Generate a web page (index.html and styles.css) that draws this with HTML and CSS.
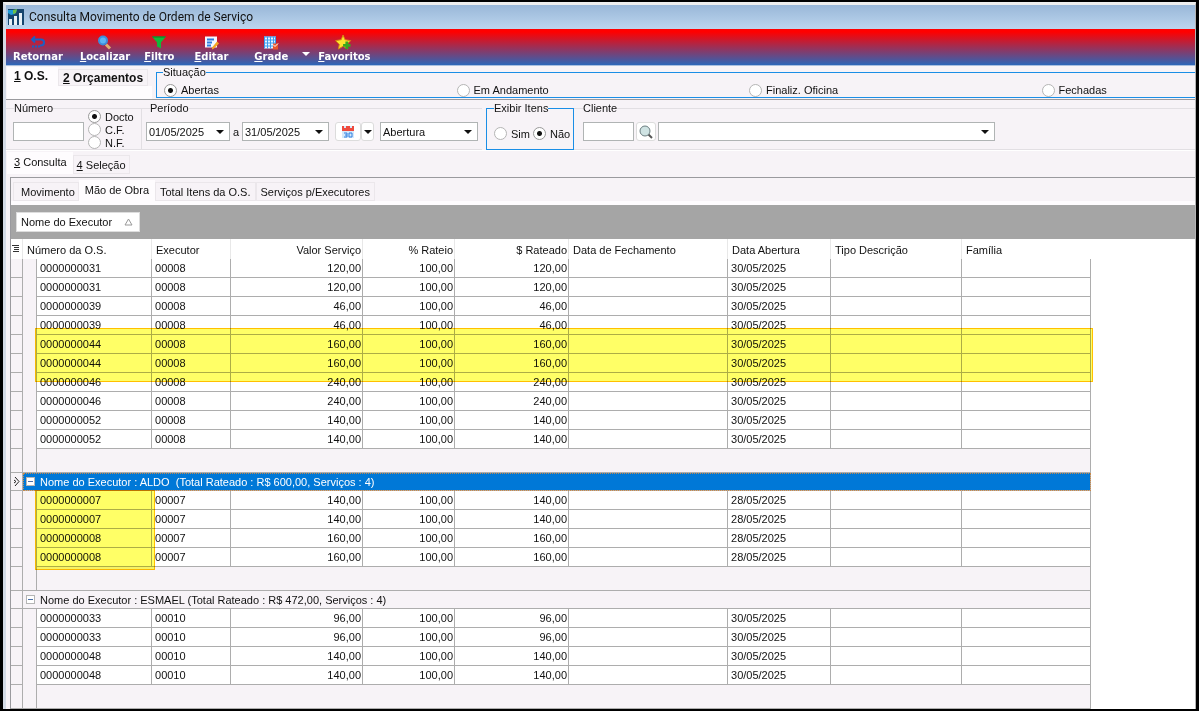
FILE: index.html
```html
<!DOCTYPE html>
<html lang="pt-BR">
  <head>
    <meta charset="UTF-8" />
    <meta name="viewport" content="width=device-width, initial-scale=1.0" />
    <title>Consulta Movimento de Ordem de Serviço</title>
    <link rel="stylesheet" href="styles.css">
  </head>

  <body>
    <div class="janela">
      <header class="titulo">
        <svg width="16" height="16" viewBox="0 0 16 16">
          <rect width="16" height="16" fill="#17466f" />
          <path d="M0 1h9L7 5 3 6 0 4z" fill="#1f9bd8" />
          <path d="M5 1l4-1-1 4-3 1z" fill="#6cc04a" />
          <path d="M1 10h3v6H1zM6 7h3v9H6zM11 4h3v12h-3z" fill="#e8f1f7" />
        </svg>
        <h1>Consulta Movimento de Ordem de Serviço</h1>
      </header>

      <nav class="barra">
        <button type="button" class="b-retornar">
          <svg width="16" height="14" viewBox="0 0 16 14">
            <path d="M5 1L2 4l3 3M2 4h9q3 0 3 3t-3 3h-1" fill="none" stroke="#1c5fc4" stroke-width="2" />
            <path d="M2 11h8" stroke="#1c5fc4" stroke-width="2" stroke-dasharray="2 1" />
          </svg>
          <span>Retornar</span>
        </button>
        <button type="button" class="b-localizar">
          <svg width="16" height="14" viewBox="0 0 16 14">
            <path d="M9 9l4 4" stroke="#e0b070" stroke-width="3" />
            <circle cx="6" cy="5" r="4" fill="#5cb4f5" stroke="#3b8edb" stroke-width="2" />
          </svg>
          <span><u>L</u>ocalizar</span>
        </button>
        <button type="button" class="b-filtro">
          <svg width="16" height="14" viewBox="0 0 16 14">
            <path d="M1 1h14L10 7v6l-4-2V7z" fill="#12b83a" />
            <path d="M1 1h14l-1 1H2z" fill="#0a7f28" />
          </svg>
          <span><u>F</u>iltro</span>
        </button>
        <button type="button" class="b-editar">
          <svg width="16" height="14" viewBox="0 0 16 14">
            <rect x="2" y="1" width="12" height="11" fill="#f4f8ff" />
            <path d="M4 4h7M4 7h5M4 10h4" stroke="#2c7be0" stroke-width="2" />
            <path d="M9 12l5-6 2 2-5 5-2 1z" fill="#f5a623" />
          </svg>
          <span><u>E</u>ditar</span>
        </button>
        <button type="button" class="b-grade">
          <svg width="16" height="14" viewBox="0 0 16 14">
            <rect x="1" y="1" width="12" height="12" fill="#e9f5ff" />
            <path d="M1 1.5h12M1 4.5h12M1 7.5h12M1 10.5h12M1.500 1v12M4.500 1v12M7.500 1v12M10.500 1v12M12.500 1v12" stroke="#3b9cf0" />
            <rect x="10" y="8" width="5" height="6" fill="#e8552b" />
            <path d="M10 9l2 2 3-3" fill="none" stroke="#fff" />
          </svg>
          <span><u>G</u>rade</span>
        </button>
        <button type="button" class="seta-barra" aria-label="Opções da grade"></button>
        <button type="button" class="b-favoritos">
          <svg width="18" height="16" viewBox="0 0 18 16">
            <path d="M8 0l2 5 6 1-4 4 1 5-5-3-5 3 1-5-4-4 6-1z" fill="#ffe52e" stroke="#d58a10" />
            <path d="M12 7v8M8 11h8" stroke="#3aa81f" stroke-width="3" />
          </svg>
          <span><u>F</u>avoritos</span>
        </button>
      </nav>

      <section class="topo">
        <div class="abas-os">
          <button type="button" class="aba ativa"><u>1</u> O.S.</button>
          <button type="button" class="aba"><u>2</u> Orçamentos</button>
        </div>
        <fieldset class="situacao">
          <legend>Situação</legend>
          <label><input type="radio" name="situacao" checked />Abertas</label>
          <label><input type="radio" name="situacao" />Em Andamento</label>
          <label><input type="radio" name="situacao" />Finaliz. Oficina</label>
          <label><input type="radio" name="situacao" />Fechadas</label>
        </fieldset>
      </section>

      <form class="filtros">
        <fieldset class="numero">
          <legend>Número</legend>
          <input type="text" class="campo" aria-label="Número" />
          <div class="tipos">
            <label><input type="radio" name="tipo" checked />Docto</label>
            <label><input type="radio" name="tipo" />C.F.</label>
            <label><input type="radio" name="tipo" />N.F.</label>
          </div>
        </fieldset>

        <fieldset class="periodo">
          <legend>Período</legend>
          <div class="combo data">
            <input type="text" value="01/05/2025" aria-label="Data inicial" />
          </div>
          <label for="fim">a</label>
          <div class="combo data">
            <input type="text" id="fim" value="31/05/2025" />
          </div>
          <div class="calendario">
            <button type="button" aria-label="Calendário">
              <svg width="14" height="14" viewBox="0 0 14 14">
                <rect x="1" y="1" width="12" height="12" fill="#d5e9fb" />
                <path d="M1 1h2v2h2V1h4v2h2V1h2v5H1z" fill="#ee4b3e" />
                <path d="M3 8h3v4H3M4 10h2M8 8h3v4H8z" fill="none" stroke="#2e7fe0" />
              </svg>
            </button>
            <button type="button" class="menu" aria-label="Opções de período"></button>
          </div>
          <div class="combo tipo-data">
            <select aria-label="Tipo de data"><option>Abertura</option></select>
          </div>
        </fieldset>

        <fieldset class="exibir">
          <legend>Exibir Itens</legend>
          <label><input type="radio" name="itens" />Sim</label>
          <label><input type="radio" name="itens" checked />Não</label>
        </fieldset>

        <fieldset class="cliente">
          <legend>Cliente</legend>
          <input type="text" class="campo" aria-label="Código do cliente" />
          <button type="button" class="lupa" aria-label="Pesquisar cliente">
            <svg width="16" height="16" viewBox="0 0 16 16">
              <path d="M10 10l4 4" stroke="#555" stroke-width="2" />
              <circle cx="7" cy="7" r="5" fill="#cfe3e3" stroke="#6b7d80" />
            </svg>
          </button>
          <div class="combo nome-cliente">
            <select aria-label="Nome do cliente"><option></option></select>
          </div>
        </fieldset>
      </form>

      <div class="abas abas-consulta">
        <button type="button" class="aba ativa"><u>3</u> Consulta</button>
        <button type="button" class="aba"><u>4</u> Seleção</button>
      </div>

      <main class="consulta">
        <div class="abas abas-grade">
          <button type="button" class="aba">Movimento</button>
          <button type="button" class="aba ativa">Mão de Obra</button>
          <button type="button" class="aba">Total Itens da O.S.</button>
          <button type="button" class="aba">Serviços p/Executores</button>
        </div>

        <div class="agrupar">
          <button type="button">
            Nome do Executor
            <svg width="9" height="8" viewBox="0 0 9 8">
              <path d="M4.500 1L8 7H1z" fill="none" stroke="#999" />
            </svg>
          </button>
        </div>

        <div class="grade">
          <table>
            <colgroup>
              <col class="c-ind" /><col class="c-rec" /><col class="c-os" /><col class="c-exec" />
              <col class="c-valor" /><col class="c-perc" /><col class="c-rateado" /><col class="c-fech" />
              <col class="c-abert" /><col class="c-tipo" /><col class="c-fam" />
            </colgroup>
            <thead>
              <tr>
                <th>
                  <svg width="8" height="9" viewBox="0 0 8 9">
                    <path d="M0 1.5h7M2 3.5h5M2 5.5h5M1 7.5h6" stroke="#333" />
                  </svg>
                </th>
                <th colspan="2">Número da O.S.</th>
                <th>Executor</th>
                <th class="num">Valor Serviço</th>
                <th class="num">% Rateio</th>
                <th class="num">$ Rateado</th>
                <th>Data de Fechamento</th>
                <th>Data Abertura</th>
                <th>Tipo Descrição</th>
                <th>Família</th>
              </tr>
            </thead>
            <tbody id="linhas"></tbody>
          </table>
          <div class="marca marca-linhas"></div>
          <div class="marca marca-os"></div>
        </div>
      </main>
    </div>

    <script>
      const grupos = [
        {
          executor: "00008",
          data: "30/05/2025",
          itens: [
            ["0000000031", "120,00"],
            ["0000000031", "120,00"],
            ["0000000039", "46,00"],
            ["0000000039", "46,00"],
            ["0000000044", "160,00"],
            ["0000000044", "160,00"],
            ["0000000046", "240,00"],
            ["0000000046", "240,00"],
            ["0000000052", "140,00"],
            ["0000000052", "140,00"],
          ],
        },
        {
          titulo: "Nome do Executor : ALDO\u00a0 (Total Rateado : R$ 600,00, Serviços : 4)",
          atual: true,
          executor: "00007",
          data: "28/05/2025",
          itens: [
            ["0000000007", "140,00"],
            ["0000000007", "140,00"],
            ["0000000008", "160,00"],
            ["0000000008", "160,00"],
          ],
        },
        {
          titulo: "Nome do Executor : ESMAEL (Total Rateado : R$ 472,00, Serviços : 4)",
          executor: "00010",
          data: "30/05/2025",
          itens: [
            ["0000000033", "96,00"],
            ["0000000033", "96,00"],
            ["0000000048", "140,00"],
            ["0000000048", "140,00"],
          ],
        },
      ];

      let html = "";

      grupos.forEach((g) => {
        if (g.titulo) {
          const seta = g.atual
            ? '<svg width="6" height="9" viewBox="0 0 6 9"><path d="M1 0l4 4.5L1 9M0 3l2 1.5L0 6" fill="none" stroke="#222"/></svg>'
            : "";
          html += `<tr class="grupo ${g.atual ? "atual" : ""}">
            <td class="ind">${seta}</td>
            <td colspan="10"><div><button type="button" class="recolher" aria-label="Recolher"></button>${g.titulo}</div></td>
          </tr>`;
        }

        g.itens.forEach(([os, valor]) => {
          html += `<tr>
            <td class="ind"></td><td class="rec"></td>
            <td>${os}</td><td>${g.executor}</td>
            <td class="num">${valor}</td><td class="num">100,00</td><td class="num">${valor}</td>
            <td></td><td>${g.data}</td><td></td><td></td>
          </tr>`;
        });

        html += `<tr class="rodape"><td class="ind"></td><td class="rec"></td><td colspan="9"></td></tr>`;
      });

      document.getElementById("linhas").innerHTML = html;
    </script>
  </body>
</html>
```

FILE: styles.css
```css
* {
  box-sizing: border-box;
}

body {
  margin: 0;
  height: 100vh;
  border: 2px solid #000;
  border-width: 2px 3px 2px 3px;
  background-color: #f7f3f7;
  color: #111;
  font-family: "Liberation Sans", Arial, sans-serif;
  font-size: 11px;
  overflow: hidden;
}

button,
input,
select {
  font: inherit;
  color: inherit;
  margin: 0;
  padding: 0;
}

button {
  border: none;
  background: none;
}

fieldset {
  margin: 0;
  padding: 0;
  border: 1px solid #e2dfe3;
  min-width: 0;
}

legend {
  padding: 0;
  line-height: 12px;
}

label {
  display: flex;
  align-items: center;
  white-space: nowrap;
}

input[type="radio"] {
  appearance: none;
  width: 13px;
  height: 13px;
  margin-right: 4px;
  border: 1px solid #b5b5b5;
  border-radius: 50%;
  background-color: #fff;
  flex: none;
}

input[type="radio"]:checked {
  border-color: #999;
  background-image: radial-gradient(circle, #111 2px, transparent 3px);
}

.janela {
  height: 100%;
  border-left: 3px solid #d4dbe6;
  border-right: 1px solid #b5b5b5;
  border-top: 3px solid #eee;
  display: flex;
  flex-direction: column;
  overflow: hidden;
}

.janela > * {
  flex: none;
}

/* titulo */
.titulo {
  display: flex;
  align-items: center;
  gap: 5px;
  height: 24px;
  padding-left: 2px;
  background: linear-gradient(#99b7d8, #bcd5ee);
}

.titulo h1 {
  margin: 0;
  font-family: Roboto, sans-serif;
  font-size: 12px;
  font-weight: normal;
}

/* barra de botoes */
.barra {
  display: flex;
  align-items: flex-start;
  height: 37px;
  padding: 6px 0 0 7px;
  border-bottom: 1px solid #a9bfe0;
  background: linear-gradient(#ff0000 8%, #2c66b8);
}

.barra button {
  display: flex;
  flex-direction: column;
  align-items: center;
  color: #fff;
  font-family: "DejaVu Sans", Verdana, sans-serif;
  font-size: 10px;
  font-weight: bold;
  line-height: 14px;
  margin-right: 14px;
}

.barra svg {
  height: 15px;
}

.barra .b-retornar {
  margin-right: 17px;
}

.barra .b-filtro {
  margin-right: 20px;
}

.barra .b-editar {
  margin-right: 26px;
}

.barra .seta-barra {
  width: 0;
  height: 0;
  margin: 17px 8px 0 0;
  border: 4px solid transparent;
  border-top-color: #fff;
  border-bottom: none;
}

/* abas */
.aba {
  background-color: #f7f3f7;
  border: 1px solid #ebe7eb;
  white-space: nowrap;
}

.aba.ativa {
  background-color: #fefcfe;
  border-color: #fefcfe;
}

.topo {
  display: flex;
  height: 34px;
  border-bottom: 1px solid #9a9a9e;
}

.abas-os {
  width: 145px;
  margin: 1px 0 0 1px;
  padding-bottom: 13px;
  background: linear-gradient(#f7f3f7 19px, #fefcfe 19px);
  display: flex;
  align-items: flex-end;
}

.abas-os .aba {
  font-size: 12px;
  font-weight: bold;
  height: 17px;
  padding: 0 4px;
}

.abas-os .ativa {
  height: 19px;
  padding: 0 9px 2px 6px;
}

/* a moldura passa da borda direita da janela */
.situacao {
  flex: 1;
  display: grid;
  grid-template-columns: repeat(4, 1fr);
  margin: 0 -140px 1px 4px;
  padding: 0 0 0 7px;
  border-color: #1a8ee6;
}

.situacao label {
  height: 14px;
  margin-top: 5px;
}

/* filtros */
.filtros {
  display: flex;
  height: 51px;
  padding-top: 2px;
  border-bottom: 1px solid #fff;
}

.filtros fieldset {
  display: flex;
  align-items: center;
  height: 48px;
  border-left: none;
  border-right: none;
}

.campo {
  height: 19px;
  border: 1px solid #b0b4b4;
  background-color: #fff;
}

.filtros .numero {
  width: 136px;
  padding: 0 0 0 7px;
  border-right: 1px solid #e2dfe3;
}

.filtros .numero legend,
.situacao legend {
  margin-left: 1px;
}

.situacao legend {
  margin-left: -1px;
}

.numero .campo {
  width: 71px;
  margin-right: 4px;
}

.tipos {
  height: 43px;
}

.tipos label {
  height: 13px;
}

.filtros .periodo {
  width: 340px;
  padding-left: 4px;
}

.periodo legend {
  margin-left: 4px;
}

.periodo > label {
  width: 12px;
  justify-content: center;
}

.combo {
  position: relative;
  height: 19px;
  border: 1px solid #b0b4b4;
  background-color: #fff;
}

.combo input,
.combo select {
  appearance: none;
  display: block;
  width: 100%;
  height: 17px;
  padding-left: 2px;
  border: none;
  background: none;
}

.combo::after {
  content: "";
  position: absolute;
  right: 5px;
  top: 7px;
  border: 4px solid transparent;
  border-top-color: #111;
  border-bottom: none;
}

.data {
  width: 84px;
}

.data + label + .data {
  width: 87px;
}

.tipo-data {
  width: 98px;
}

.calendario {
  display: flex;
  margin: 0 6px;
}

.calendario button,
.lupa {
  display: flex;
  align-items: center;
  justify-content: center;
  width: 26px;
  height: 19px;
  border: 1px solid #dcdcdc;
  border-radius: 3px;
  background-color: #fff;
}

.calendario .menu {
  width: 13px;
}

.menu::after {
  content: "";
  border: 4px solid transparent;
  border-top-color: #111;
  border-bottom: none;
}

.filtros .exibir {
  width: 88px;
  gap: 3px;
  padding: 4px 0 0 7px;
  margin-left: 4px;
  border: 1px solid #1a8ee6;
}

.filtros .cliente {
  flex: 1;
  padding-left: 9px;
}

.cliente .campo {
  width: 51px;
}

.lupa {
  width: 20px;
  margin: 0 2px;
}

.nome-cliente {
  width: 337px;
}

.abas {
  display: flex;
  align-items: flex-end;
}

.abas-consulta {
  height: 26px;
  padding: 0 0 3px 1px;
}

.abas-consulta .aba {
  height: 19px;
  padding: 0 3px;
}

.abas-consulta .ativa {
  height: 22px;
  padding: 0 5px 2px 6px;
}

/* consulta */
main.consulta {
  flex: 1;
  min-height: 0;
  margin-left: 4px;
  border-left: 1px solid #9a9a9e;
  border-top: 1px solid #9a9a9e;
  overflow: hidden;
}

.abas-grade {
  height: 27px;
  padding-left: 2px;
  border-bottom: 4px solid #fefcfe;
}

.abas-grade .aba {
  height: 19px;
  padding: 0 4px;
}

.abas-grade .aba:first-child {
  padding: 0 3px 0 7px;
}

.abas-grade .ativa {
  height: 21px;
  padding: 0 5px 2px;
}

.agrupar {
  height: 34px;
  padding: 7px 5px;
  background-color: #a5a5a5;
}

.agrupar button {
  display: flex;
  align-items: center;
  justify-content: space-between;
  width: 124px;
  height: 20px;
  padding: 0 6px 0 4px;
  background-color: #fff;
  border: 1px solid #ddd;
}

/* grade */
.grade {
  position: relative;
  background-color: #fff;
  min-height: 100%;
}

table {
  width: 1080px;
  table-layout: fixed;
  border-collapse: separate;
  border-spacing: 0;
}

.c-ind { width: 12px; }
.c-rec { width: 14px; }
.c-os { width: 115px; }
.c-exec { width: 79px; }
.c-valor { width: 132px; }
.c-perc { width: 92px; }
.c-rateado { width: 114px; }
.c-fech { width: 159px; }
.c-abert { width: 103px; }
.c-tipo { width: 131px; }
.c-fam { width: 129px; }

th,
td {
  height: 19px;
  padding: 0 3px;
  text-align: left;
  white-space: nowrap;
  line-height: 14px;
  border-right: 1px solid #adadad;
  border-bottom: 1px solid #adadad;
}

th {
  height: 20px;
  padding: 2px 4px 0;
  font-weight: normal;
  border-right-color: #e8e8e8;
  border-bottom: none;
}

th:last-child {
  border-right: none;
}

th:first-child {
  padding: 0 1px;
}

th.num,
.num {
  text-align: right;
  padding-right: 1px;
}

.ind,
.rec,
.rodape td,
.grupo td {
  background-color: #f7f3f7;
}

.rec {
  border-bottom: none;
}

.rodape td {
  height: 24px;
}

.rodape .rec {
  border-bottom: 1px solid #adadad;
}

.grupo td {
  height: 18px;
}

.grupo div {
  display: flex;
  align-items: center;
}

.atual td:last-child {
  background-color: #0078d7;
  color: #fff;
  outline: 1px dotted #c98a4a;
  outline-offset: -1px;
}

.recolher {
  width: 9px;
  height: 9px;
  margin: 0 5px 0 0;
  border: 1px solid #b5b5b5;
  background: linear-gradient(#4a6ea8, #4a6ea8) center / 5px 1px no-repeat #fff;
}

/* destaques sobre a grade */
.marca {
  position: absolute;
  left: 24px;
  background-color: #ffff66;
  border: 1px solid #ffc000;
  mix-blend-mode: multiply;
}

.marca-linhas {
  top: 89px;
  width: 1058px;
  height: 54px;
}

.marca-os {
  top: 251px;
  width: 120px;
  height: 80px;
}
```
